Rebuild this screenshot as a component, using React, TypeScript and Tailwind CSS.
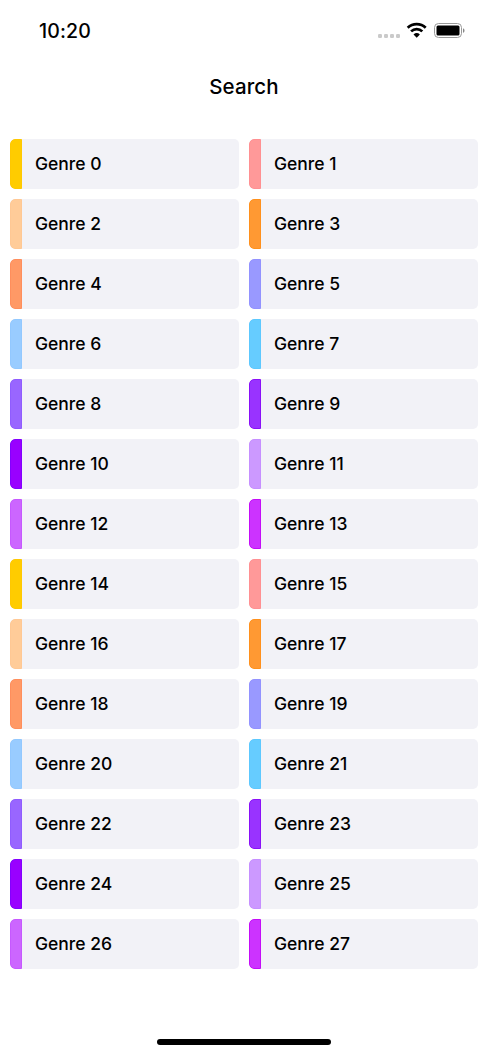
const stripes = [
  'bg-[#ffcc00] border-[#ffc800]', 'bg-[#ff9999] border-[#ff9092]', 'bg-[#ffcc99] border-[#ffc894]', 'bg-[#ff9933] border-[#ff901c]',
  'bg-[#ff9966] border-[#ff8e5c]', 'bg-[#9999ff] border-[#9292ff]', 'bg-[#99ccff] border-[#92c8ff]', 'bg-[#66ccff] border-[#5cc8ff]',
  'bg-[#9966ff] border-[#8f5cff]', 'bg-[#9933ff] border-[#8a10f8]', 'bg-[#9900ff] border-[#8200ff]', 'bg-[#cc99ff] border-[#c68fff]',
  'bg-[#cc66ff] border-[#c658ff]', 'bg-[#cc33ff] border-[#c40cf8]',
];

function StatusBar() {
  return (
    <div className="flex h-[62px] items-center justify-between pr-[22px] pl-[39px]">
      <span className="text-[19.5px] leading-6 font-medium tracking-[0.15px]">10:20</span>
      <svg width="88" height="20" viewBox="0 0 88 20">
        <g fill="#cacaca">
          <rect x="0" y="13" width="4" height="4" rx="1.2" />
          <rect x="6" y="13" width="4" height="4" rx="1.2" />
          <rect x="12" y="13" width="4" height="4" rx="1.2" />
          <rect x="18" y="13" width="4" height="4" rx="1.2" />
        </g>
        <g fill="none" stroke="#000" strokeWidth="2.7">
          <path d="M29.7 6.8a13 13 0 0 1 18 0" />
          <path d="M33.1 10.4a8 8 0 0 1 11.2 0" />
        </g>
        <path d="M38.7 16.8l-3.2-3.3a4.7 4.7 0 0 1 6.4 0z" />
        <rect x="56.5" y="2.5" width="27" height="14" rx="4" fill="none" stroke="#999" />
        <rect x="58.5" y="4.5" width="23" height="10" rx="1.5" />
        <path d="M85 7.2c2 .8 2 3.8 0 4.6z" fill="#888" />
      </svg>
    </div>
  );
}

export default function App() {
  return (
    <div className="flex h-[1055px] w-[488px] flex-col bg-white font-['Inter',sans-serif] text-black">
      <StatusBar />
      <h1 className="h-[77px] pt-[10px] text-center text-[20.5px] leading-[30px] font-medium tracking-[0.1px]">Search</h1>
      <main className="grid grid-cols-2 gap-[10px] px-[10px]">
        {Array.from({ length: 28 }, (_, i) => (
          <div key={i} className="flex h-[50px] items-center overflow-hidden rounded-[5px] bg-[#f2f2f7]">
            <div className={`h-full w-[12.4px] rounded-l-[5px] border ${stripes[i % 14]}`} />
            <span className="pl-[12.6px] text-[17.5px] font-medium">Genre {i}</span>
          </div>
        ))}
      </main>
      <div className="mx-auto mt-auto mb-[10px] h-[6px] w-[174px] rounded-full bg-black" />
    </div>
  );
}
